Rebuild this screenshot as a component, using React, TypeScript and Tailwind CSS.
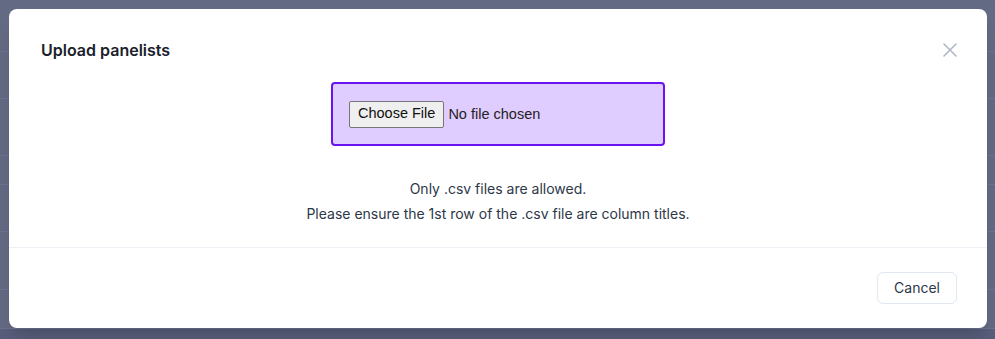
const rows = [52, 47, 57, 29, 47, 58, 39];

export default function App() {
    return (
        <div className="relative h-[339px] w-full overflow-hidden bg-[#636a83] font-['Inter',sans-serif]">
            {/* Page behind the overlay */}
            <div className="flex flex-col">
                {rows.map((h, i) => (
                    <div
                        key={i}
                        style={{ height: h }}
                        className="border-b border-[#6c7390]"
                    />
                ))}
                <div className="h-[20px] bg-[#585e7b]" />
            </div>

            {/* Modal */}
            <div className="absolute inset-0 pl-[9px] pr-[8px] pt-[9px] pb-[11px]">
                <div className="flex h-full flex-col rounded-lg bg-white shadow-xl">
                    <div className="flex items-center justify-between px-8 pt-[29px]">
                        <h2 className="text-base font-semibold leading-6 text-[#1a202c]">
                            Upload panelists
                        </h2>
                        <button className="mr-[-2px] text-[#aeb7c6]">
                            <svg
                                width="14"
                                height="14"
                                viewBox="0 0 14 14"
                                fill="none"
                                stroke="currentColor"
                                strokeWidth="1.6"
                                strokeLinecap="round"
                            >
                                <path d="M1 1L13 13M13 1L1 13" />
                            </svg>
                        </button>
                    </div>

                    <div className="flex flex-col items-center px-8 pt-[20px] pb-[21px]">
                        <div className="flex h-16 w-[334px] items-center rounded border-2 border-[#6b12f0] bg-[#e0cdff] px-4">
                            <input
                                type="file"
                                accept=".csv"
                                className="font-['Liberation_Sans',sans-serif] text-[14.5px] text-[#222] file:mr-1 file:h-[27px] file:rounded-[2px] file:border file:border-[#767676] file:bg-[#efefef] file:px-2 file:text-[14.5px] file:text-[#111]"
                            />
                        </div>
                        <div className="mt-[30px] text-center text-sm leading-[25px] text-[#2d3748]">
                            <p>Only .csv files are allowed.</p>
                            <p>
                                Please ensure the 1st row of the .csv file are
                                column titles.
                            </p>
                        </div>
                    </div>

                    <div className="flex justify-end border-t border-[#edf0f4] px-[30px] py-6">
                        <button className="h-8 rounded-md border border-[#e2e8f0] px-4 text-sm text-[#2d3748]">
                            Cancel
                        </button>
                    </div>
                </div>
            </div>
        </div>
    );
}
